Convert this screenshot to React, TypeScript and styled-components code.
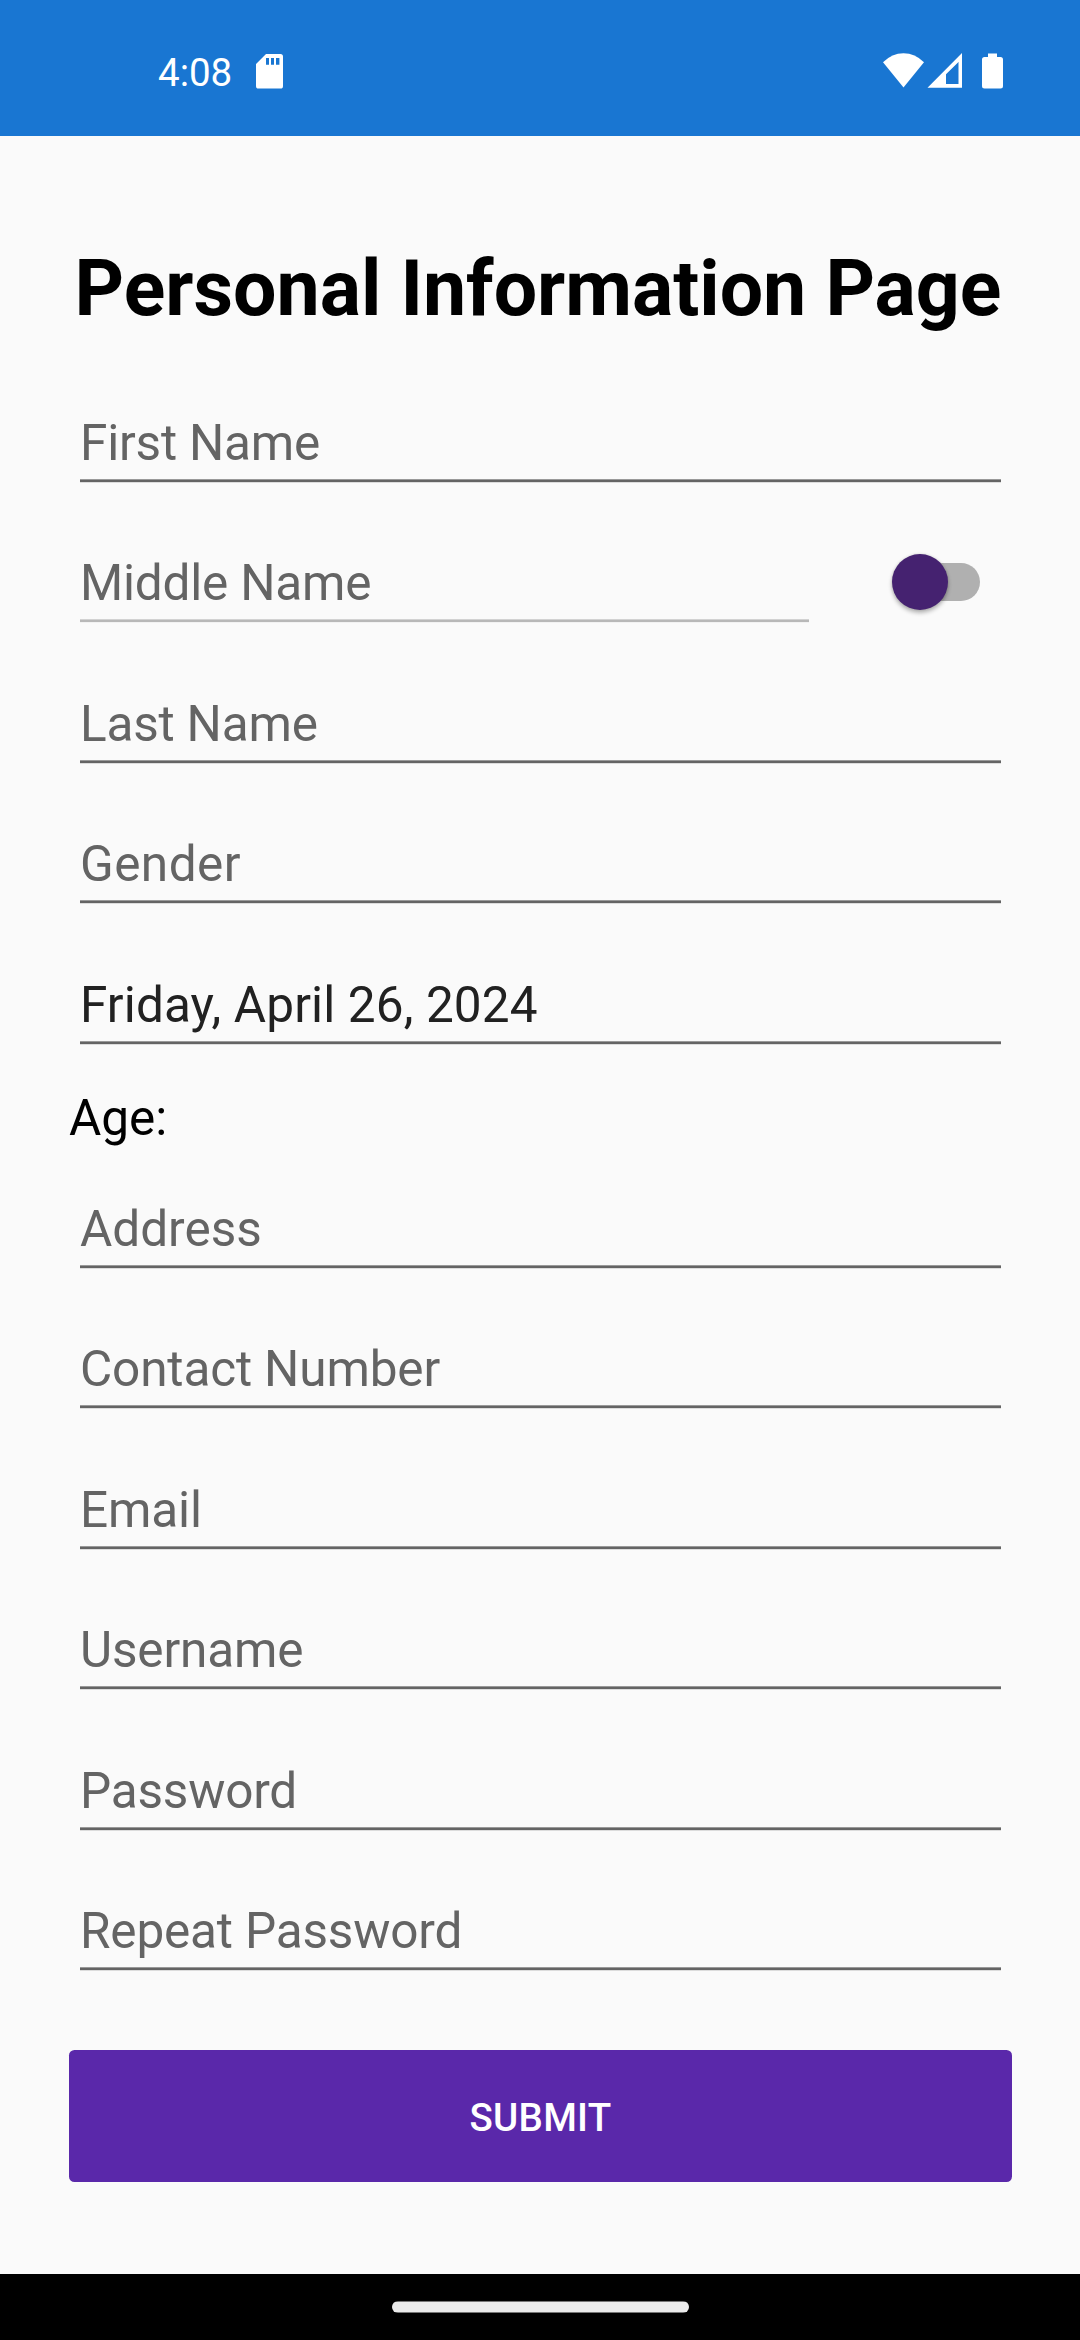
import React, { useState } from "react";
import styled, { createGlobalStyle } from "styled-components";

const GlobalStyle = createGlobalStyle`
  *, *::before, *::after { box-sizing: border-box; }
  html, body { margin: 0; padding: 0; background: #fafafa; }
  body, input, button { font-family: Roboto, "Noto Sans", sans-serif; }
`;

const Screen = styled.div`
  display: flex;
  flex-direction: column;
  width: 1080px;
  height: 2340px;
  overflow: hidden;
  background: #fafafa;
`;

const StatusBar = styled.header`
  display: flex;
  flex: none;
  align-items: flex-start;
  justify-content: space-between;
  height: 136px;
  padding: 50px 76px 0 158px;
  background: #1976d2;
  color: #fff;
`;

const StatusGroup = styled.div<{ $gap: number }>`
  display: flex;
  align-items: flex-start;
  gap: ${({ $gap }) => $gap}px;
`;

const Clock = styled.span`
  width: 75px;
  font-size: 38.5px;
  line-height: 46px;
  white-space: nowrap;
`;

const Glyph = styled.svg<{ $top?: number }>`
  display: block;
  margin-top: ${({ $top = 0 }) => $top}px;
  fill: #fff;
`;

const Form = styled.form`
  display: flex;
  flex: 1;
  flex-direction: column;
  padding: 0 68px 0 69px;
`;

const Title = styled.h1`
  height: 200px;
  margin: 0 0 69px;
  padding: 108px 5px 0 0;
  color: #000;
  font-size: 77px;
  font-weight: 700;
  line-height: 90px;
  text-align: center;
  white-space: nowrap;
`;

const FieldRow = styled.div<{ $height: number }>`
  display: flex;
  align-items: flex-end;
  height: ${({ $height }) => $height}px;
  padding: 0 10px 0 11px;
`;

const FieldBox = styled.label<{ $width?: number; $faint?: boolean }>`
  display: block;
  width: ${({ $width = 921 }) => $width}px;
  padding-bottom: 4px;
  background: linear-gradient(
      ${({ $faint }) =>
        $faint
          ? "#d2d2d2 0 1px, #b8b8b8 1px 3px, #f2f2f2 3px 4px"
          : "#999 0 1px, #646464 1px 3px, #dcdcdc 3px 4px"}
    )
    bottom / 100% 4px no-repeat;
`;

const Input = styled.input<{ $tracking: number }>`
  display: block;
  width: 100%;
  height: 76px;
  padding: 4px 0 0;
  border: 0;
  outline: 0;
  background: transparent;
  color: #212121;
  font-size: 49.5px;
  letter-spacing: ${({ $tracking }) => $tracking}px;
  line-height: 58px;

  &::placeholder {
    color: #646464;
    opacity: 1;
  }
`;

const AgeLabel = styled.p`
  height: 84px;
  margin: 0;
  padding-top: 44px;
  color: #000;
  font-size: 49.5px;
  line-height: 58px;
`;

const Switch = styled.button`
  display: flex;
  align-items: center;
  width: 88px;
  height: 56px;
  margin: 0 0 13px 83px;
  padding: 0;
  border: 0;
  background: linear-gradient(#b0b0b0, #b0b0b0) 28px 9px / 32px 38px no-repeat;
`;

const Thumb = styled.span`
  flex: none;
  z-index: 1;
  width: 56px;
  height: 56px;
  border-radius: 50%;
  background: #452270;
  box-shadow: 0 3px 4px rgba(0, 0, 0, 0.28), 0 0 3px rgba(0, 0, 0, 0.14);
`;

const TrackEnd = styled.span`
  flex: none;
  width: 50px;
  height: 38px;
  margin-left: -18px;
  border-radius: 0 19px 19px 0;
  background: #b0b0b0;
`;

const Submit = styled.button`
  flex: none;
  width: 943px;
  height: 132px;
  margin-top: 79px;
  padding: 3px 0 0;
  border: 0;
  border-radius: 5.5px;
  background: #5a28aa;
  color: #fff;
  font-size: 38.5px;
  font-weight: 500;
  letter-spacing: 0.3px;
  line-height: 46px;
  text-transform: uppercase;
`;

const NavBar = styled.footer`
  display: flex;
  flex: none;
  justify-content: center;
  height: 66px;
  padding-top: 27px;
  background: #000;
`;

const NavHandle = styled.div`
  width: 297px;
  height: 12px;
  border-radius: 6px;
  background: linear-gradient(#777 0 1px, #ebebeb 1px 11px, #777 11px 12px);
`;

type Field = {
  label: string;
  height: number;
  tracking?: number;
  value?: string;
  toggle?: boolean;
};

const nameFields: Field[] = [
  { label: "First Name", height: 78, tracking: -0.2 },
  { label: "Middle Name", height: 140, tracking: -0.2, toggle: true },
  { label: "Last Name", height: 141, tracking: -0.2 },
  { label: "Gender", height: 140, tracking: 0.45 },
  { label: "Date of Birth", height: 141, tracking: 0.12, value: "Friday, April 26, 2024" },
];

const accountFields: Field[] = [
  { label: "Address", height: 140 },
  { label: "Contact Number", height: 140, tracking: -0.15 },
  { label: "Email", height: 141, tracking: -0.15 },
  { label: "Username", height: 140, tracking: -0.15 },
  { label: "Password", height: 141, tracking: -0.2 },
  { label: "Repeat Password", height: 140, tracking: -0.18 },
];

function FormField({ label, height, tracking = 0, value, toggle }: Field) {
  const [text, setText] = useState(value ?? "");
  return (
    <FieldRow $height={height}>
      <FieldBox $width={toggle ? 729 : undefined} $faint={toggle}>
        <Input
          $tracking={tracking}
          placeholder={label}
          value={text}
          disabled={toggle}
          onChange={(e) => setText(e.target.value)}
        />
      </FieldBox>
      {toggle && (
        <Switch type="button" role="switch" aria-checked={false}>
          <Thumb />
          <TrackEnd />
        </Switch>
      )}
    </FieldRow>
  );
}

export default function App() {
  return (
    <>
      <GlobalStyle />
      <Screen>
        <StatusBar>
          <StatusGroup $gap={23}>
            <Clock>4:08</Clock>
            <Glyph width="27" height="35" viewBox="0 0 27 35" $top={4}>
              <path
                fillRule="evenodd"
                d="M10 0H24.5Q27 0 27 2.5V32Q27 34.6 24.5 34.6H2.5Q0 34.6 0 32V10ZM10 4V10.7H13V4ZM15 4V10.7H18V4ZM20 4V10.7H23.4V4Z"
              />
            </Glyph>
          </StatusGroup>
          <StatusGroup $gap={0}>
            <Glyph width="41" height="35" viewBox="0 0 41 35" $top={3}>
              <path d="M0 9.3Q9 0.3 20.5 0.3T41 9.3L20.5 34.6Z" />
            </Glyph>
            <Glyph width="44" height="35" viewBox="0 0 44 35" $top={3}>
              <path fillRule="evenodd" d="M38 0V34.7H3.5ZM34.5 9L22 21.3V31H34.5Z" />
            </Glyph>
            <Glyph width="36" height="36" viewBox="0 0 36 36" $top={3}>
              <path d="M20 0.6H29V4H32.5Q35 4 35 6.5V33Q35 35.5 32.5 35.5H16.5Q14 35.5 14 33V6.5Q14 4 16.5 4H20Z" />
            </Glyph>
          </StatusGroup>
        </StatusBar>
        <Form onSubmit={(e) => e.preventDefault()}>
          <Title>Personal Information Page</Title>
          {nameFields.map((field) => (
            <FormField key={field.label} {...field} />
          ))}
          <AgeLabel>Age:</AgeLabel>
          {accountFields.map((field) => (
            <FormField key={field.label} {...field} />
          ))}
          <Submit type="submit">Submit</Submit>
        </Form>
        <NavBar>
          <NavHandle />
        </NavBar>
      </Screen>
    </>
  );
}
